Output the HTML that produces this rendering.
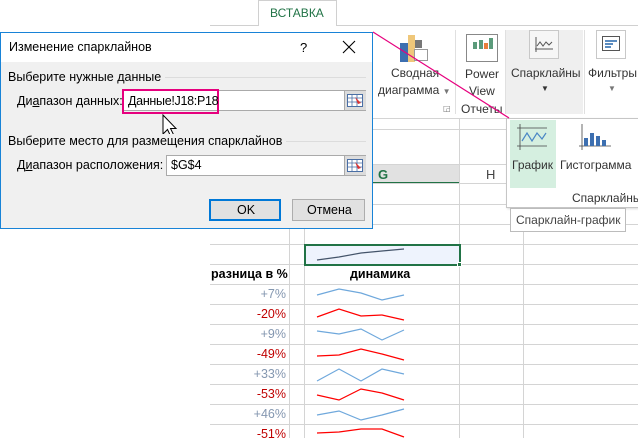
<!DOCTYPE html>
<html><head><meta charset="utf-8"><style>
*{margin:0;padding:0;box-sizing:border-box}
body{width:638px;height:438px;overflow:hidden;background:#fff;font-family:"Liberation Sans","DejaVu Sans",sans-serif;font-size:12px;color:#333;position:relative}
.a{position:absolute}
.hl{position:absolute;height:1px;background:#d4d4d4}
.vl{position:absolute;width:1px;background:#d4d4d4}
.t{position:absolute;white-space:nowrap}
.num{position:absolute;right:352px;font-size:12.5px;white-space:nowrap}
.p{color:#8497b0}.m{color:#c00000}
</style></head><body>
<!-- ribbon -->
<div class="hl" style="left:210px;right:0;top:25px;background:#d0d0d0"></div>
<div class="a" style="left:258px;top:0;width:79px;height:26px;border:1px solid #d0d0d0;border-bottom:none;background:#fff"></div>
<div class="t" style="left:270px;top:6px;color:#217346;font-size:12px">ВСТАВКА</div>
<div class="a" style="left:506px;top:30px;width:77px;height:84px;background:#efefef"></div>
<div class="vl" style="left:455px;top:30px;height:84px;background:#e0e0e0"></div>
<div class="vl" style="left:505px;top:30px;height:84px;background:#e0e0e0"></div>
<div class="vl" style="left:584px;top:30px;height:84px;background:#e0e0e0"></div>
<!-- pivot chart icon -->
<div class="a" style="left:400px;top:43px;width:8px;height:19px;background:#3d6fb0"></div>
<div class="a" style="left:408px;top:35px;width:7px;height:27px;background:#efc77a"></div>
<div class="a" style="left:415px;top:40px;width:7px;height:8px;background:#777"></div>
<div class="a" style="left:414px;top:49px;width:14px;height:12px;border:1px solid #999;background:#fff"></div>
<div class="t" style="left:391px;top:66px;font-size:12px">Сводная</div>
<div class="t" style="left:378px;top:83px;font-size:12px">диаграмма <span style="font-size:8px;color:#777">▼</span></div>
<div class="t" style="left:443px;top:104px;font-size:8px;color:#777">◲</div>
<!-- power view -->
<div class="a" style="left:466px;top:34px;width:32px;height:28px;border:1px solid #888;background:#fff"></div>
<div class="a" style="left:473px;top:42px;width:4px;height:7px;background:#5b9b7b"></div>
<div class="a" style="left:479px;top:40px;width:4px;height:9px;background:#5b9b7b"></div>
<div class="a" style="left:484px;top:43px;width:4px;height:6px;background:#e87e3b"></div>
<div class="a" style="left:489px;top:38px;width:4px;height:11px;background:#5b9b7b"></div>
<div class="t" style="left:465px;top:67px;font-size:12px">Power</div>
<div class="t" style="left:469px;top:84px;font-size:12px">View</div>
<div class="t" style="left:461px;top:102px;font-size:12px">Отчеты</div>
<!-- sparkline btn -->
<div class="a" style="left:529px;top:30px;width:30px;height:29px;border:1px solid #c8c8c8;background:#f6f6f6"></div>
<svg class="a" style="left:535px;top:37px" width="18" height="16"><path d="M1 0V15M0 12H18M2 9L5 5L8 9L11 5L14 8L17 5" fill="none" stroke="#555" stroke-width="1"/></svg>
<div class="t" style="left:511px;top:66px;font-size:12px">Спарклайны</div>
<div class="t" style="left:541px;top:84px;font-size:8px">▼</div>
<div class="a" style="left:596px;top:30px;width:30px;height:29px;border:1px solid #c8c8c8;background:#fff"></div>
<svg class="a" style="left:602px;top:36px" width="18" height="16"><rect x="0.5" y="0.5" width="17" height="14" fill="none" stroke="#555"/><path d="M3 5H15M3 8H11M3 11H9" stroke="#5b8cc0" stroke-width="2"/></svg>
<div class="t" style="left:588px;top:66px;font-size:12px">Фильтры</div>
<div class="t" style="left:608px;top:84px;font-size:8px;color:#777">▼</div>
<!-- grid -->
<div class="hl" style="left:370px;right:0;top:118px"></div>
<div class="hl" style="left:370px;right:0;top:129px"></div>
<div class="hl" style="left:370px;right:0;top:164px"></div>
<div class="a" style="left:370px;top:165px;width:89px;height:18px;background:#e1e1e1"></div>
<div class="a" style="left:370px;top:182px;width:89px;height:2px;background:#217346"></div>
<div class="t" style="left:378px;top:167px;color:#217346;font-weight:bold;font-size:13px">G</div>
<div class="t" style="left:486px;top:167px;color:#444;font-size:13px">H</div>
<div class="hl" style="left:370px;right:0;top:183px"></div>
<div class="hl" style="left:210px;right:0;top:204px"></div>
<div class="hl" style="left:210px;right:0;top:224px"></div>
<div class="hl" style="left:210px;right:0;top:244px"></div>
<div class="hl" style="left:210px;right:0;top:264px"></div>
<div class="hl" style="left:210px;right:0;top:284px"></div>
<div class="hl" style="left:210px;right:0;top:304px"></div>
<div class="hl" style="left:210px;right:0;top:324px"></div>
<div class="hl" style="left:210px;right:0;top:344px"></div>
<div class="hl" style="left:210px;right:0;top:364px"></div>
<div class="hl" style="left:210px;right:0;top:384px"></div>
<div class="hl" style="left:210px;right:0;top:404px"></div>
<div class="hl" style="left:210px;right:0;top:424px"></div>
<div class="vl" style="left:289px;top:229px;bottom:0"></div>
<div class="vl" style="left:304px;top:229px;bottom:0"></div>
<div class="vl" style="left:459px;top:118px;bottom:0"></div>
<div class="vl" style="left:523px;top:229px;bottom:0"></div>
<div class="a" style="left:304px;top:244px;width:157px;height:22px;border:2px solid #217346;background:#eef3fd"></div>
<div class="a" style="left:457px;top:262px;width:5px;height:5px;background:#217346;border:1px solid #fff"></div>
<div class="t" style="left:211px;top:267px;font-weight:bold;font-size:12.5px;color:#000;background:#fff">разница в %</div>
<div class="t" style="left:350px;top:267px;font-weight:bold;font-size:12.5px;color:#000">динамика</div>
<div class="num p" style="top:287px">+7%</div>
<div class="num m" style="top:307px">-20%</div>
<div class="num p" style="top:327px">+9%</div>
<div class="num m" style="top:347px">-49%</div>
<div class="num p" style="top:367px">+33%</div>
<div class="num m" style="top:387px">-53%</div>
<div class="num p" style="top:407px">+46%</div>
<div class="num m" style="top:427px">-51%</div>
<svg class="a" style="left:0;top:0" width="638" height="438"><g fill="none" stroke-width="1.2">
<polyline stroke="#44546a" points="317,260 339,257 361,253 382,251 404,249"/>
<polyline stroke="#6fa8dc" points="317,295 339,289 361,293 382,300 404,295"/>
<polyline stroke="#ff0000" points="317,317 339,309 361,316 382,315 404,320"/>
<polyline stroke="#6fa8dc" points="317,331 339,334 361,329 382,340 404,330"/>
<polyline stroke="#ff0000" points="317,356 339,355 361,349 382,354 404,360"/>
<polyline stroke="#6fa8dc" points="317,381 339,369 361,381 382,369 404,374"/>
<polyline stroke="#ff0000" points="317,395 339,400 361,389 382,393 404,400"/>
<polyline stroke="#6fa8dc" points="317,415 339,411 361,420 382,415 404,409"/>
<polyline stroke="#ff0000" points="317,433 339,432 361,429 382,429 404,437"/>
</g></svg>
<!-- dropdown -->
<div class="a" style="left:506px;top:118px;width:140px;height:90px;background:#fff;border:1px solid #c6c6c6;box-shadow:1px 1px 2px rgba(0,0,0,.15)"></div>
<div class="a" style="left:510px;top:120px;width:46px;height:68px;background:#d5efe0"></div>
<svg class="a" style="left:517px;top:124px" width="30" height="26"><path d="M3 0V26M0 4H30M0 22H30" fill="none" stroke="#444" stroke-width="0.8"/><path d="M5 17L10 9L15 17L20 9L25 15L29 9" fill="none" stroke="#4a86c5" stroke-width="1.2"/></svg>
<svg class="a" style="left:579px;top:124px" width="32" height="26"><path d="M3 0V26M0 22H32" stroke="#444" stroke-width="0.8"/><rect x="5" y="14" width="4" height="8" fill="#3d6fb0"/><rect x="11" y="9" width="4" height="13" fill="#3d6fb0"/><rect x="17" y="12" width="4" height="10" fill="#3d6fb0"/><rect x="23" y="16" width="4" height="6" fill="#3d6fb0"/></svg>
<div class="t" style="left:512px;top:158px;font-size:12px">График</div>
<div class="t" style="left:560px;top:158px;font-size:12px">Гистограмма</div>
<div class="t" style="left:572px;top:191px;font-size:12px">Спарклайны</div>
<div class="a" style="left:510px;top:208px;width:116px;height:24px;background:#fff;border:1px solid #bcbcbc"></div>
<div class="t" style="left:516px;top:213px;font-size:12px;color:#444">Спарклайн-график</div>
<!-- dialog -->
<div class="a" style="left:0;top:32px;width:373px;height:197px;background:#f0f0f0;border:1px solid #1883d7"></div>
<div class="a" style="left:1px;top:33px;width:371px;height:29px;background:#fff"></div>
<div class="t" style="left:9px;top:40px;font-size:12.5px;color:#000">Изменение спарклайнов</div>
<div class="t" style="left:300px;top:40px;font-size:13px;color:#000">?</div>
<svg class="a" style="left:342px;top:40px" width="14" height="14"><path d="M1 1L13 13M13 1L1 13" stroke="#000" stroke-width="1.1"/></svg>
<div class="hl" style="left:152px;width:214px;top:77px;background:#dcdcdc"></div>
<div class="t" style="left:8px;top:70px;font-size:12.5px;color:#000;background:#f0f0f0;padding-right:4px">Выберите нужные данные</div>
<div class="t" style="left:17px;top:94px;font-size:12.5px;color:#000">Ди<u>а</u>пазон данных:</div>
<div class="a" style="left:122px;top:90px;width:244px;height:21px;background:#fff;border:1px solid #aaa"></div>
<div class="a" style="left:122px;top:89px;width:97px;height:25px;border:2px solid #e6007e"></div>
<div class="t" style="left:128px;top:94px;font-size:12.5px;color:#000;letter-spacing:-0.3px">Данные!J18:P18</div>
<div class="a" style="left:344px;top:91px;width:22px;height:19px;background:#dcdcdc;border-left:1px solid #aaa"></div>
<svg class="a" style="left:347px;top:94px" width="16" height="13"><rect x="0.5" y="0.5" width="15" height="12" fill="#fff" stroke="#4a6fa5"/><path d="M0 4H16M0 8H16M5 0V13M10 0V13" stroke="#4a6fa5" stroke-width="0.8"/><path d="M8 3L14 9L11 10Z" fill="#d33"/></svg>
<svg class="a" style="left:162px;top:114px" width="20" height="24"><path d="M1 1V20L5.5 15.5L9 23L12 21.5L8.5 14.5H14Z" fill="#fff" stroke="#000" stroke-width="1"/></svg>
<div class="hl" style="left:262px;width:104px;top:141px;background:#dcdcdc"></div>
<div class="t" style="left:8px;top:134px;font-size:12.5px;color:#000;background:#f0f0f0;padding-right:4px">Выберите место для размещения спарклайнов</div>
<div class="t" style="left:17px;top:158px;font-size:12.5px;color:#000">Д<u>и</u>апазон расположения:</div>
<div class="a" style="left:166px;top:155px;width:200px;height:21px;background:#fff;border:1px solid #aaa"></div>
<div class="t" style="left:171px;top:158px;font-size:12.5px;color:#000">$G$4</div>
<div class="a" style="left:344px;top:156px;width:22px;height:19px;background:#dcdcdc;border-left:1px solid #aaa"></div>
<svg class="a" style="left:347px;top:159px" width="16" height="13"><rect x="0.5" y="0.5" width="15" height="12" fill="#fff" stroke="#4a6fa5"/><path d="M0 4H16M0 8H16M5 0V13M10 0V13" stroke="#4a6fa5" stroke-width="0.8"/><path d="M8 3L14 9L11 10Z" fill="#d33"/></svg>
<div class="a" style="left:209px;top:199px;width:72px;height:22px;background:#e1e1e1;border:2px solid #0078d7"></div>
<div class="t" style="left:237px;top:203px;font-size:12.5px;color:#000">OK</div>
<div class="a" style="left:292px;top:199px;width:73px;height:22px;background:#e1e1e1;border:1px solid #adadad"></div>
<div class="t" style="left:307px;top:203px;font-size:12.5px;color:#000">Отмена</div>
<!-- pink leader line -->
<svg class="a" style="left:0;top:0" width="638" height="438"><line x1="373" y1="32" x2="509" y2="118" stroke="#e6007e" stroke-width="1.2"/></svg>
</body></html>
